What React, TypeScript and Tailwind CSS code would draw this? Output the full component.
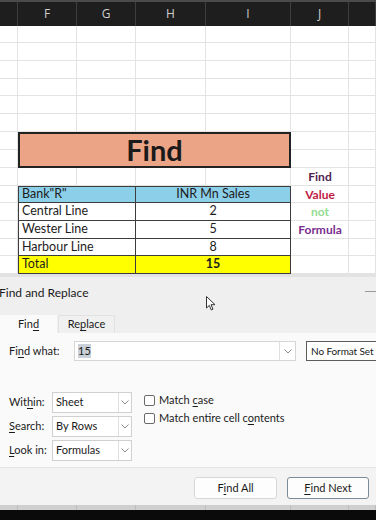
import React from "react";

const cols = ["", "F", "G", "H", "I", "J", ""];

function U({ children }: { children: React.ReactNode }) {
  return <span className="underline underline-offset-[2px] decoration-[1px]">{children}</span>;
}

function Chevron() {
  return (
    <svg width="8" height="5" viewBox="0 0 8 5" className="block">
      <polyline points="0.5,0.5 4,4 7.5,0.5" fill="none" stroke="#8a8a8a" strokeWidth="1" />
    </svg>
  );
}

function Select({ value }: { value: string }) {
  return (
    <div className="flex h-[21px] w-[80px] shrink-0 items-stretch border border-[#d0d0d0] bg-white">
      <div className="flex flex-1 items-center pl-[3px] text-[11px] text-[#1a1a1a]">{value}</div>
      <div className="flex w-[13px] items-center justify-center border-l border-[#e0e0e0]">
        <Chevron />
      </div>
    </div>
  );
}

function CheckRow({ children }: { children: React.ReactNode }) {
  return (
    <div className="flex h-[18px] items-center gap-[4px]">
      <div className="h-[11px] w-[11px] shrink-0 rounded-[2px] border border-[#6a6a6a] bg-white" />
      <div className="whitespace-nowrap text-[11px] text-[#1a1a1a]">{children}</div>
    </div>
  );
}

export default function App() {
  const bg: React.ReactNode[] = [];
  for (let r = 0; r < 14; r++) {
    for (let c = 0; c < 7; c++) {
      bg.push(
        <div
          key={`${r}-${c}`}
          className="border-b border-r border-[#e3e3e3]"
          style={{ gridRowStart: r + 1, gridColumnStart: c + 1 }}
        />
      );
    }
  }
  const cell = "flex items-center border-b border-r border-[#3c3c3c] text-[12.5px] text-[#1c1c1c]";
  return (
    <div
      className="relative h-[520px] w-[376px] overflow-hidden bg-white"
      style={{ fontFamily: "Lato, 'Liberation Sans', sans-serif" }}
    >
      {/* Column header */}
      <div className="h-[2px] bg-[#4a4a4a]" />
      <div className="grid h-[24px] grid-cols-[18px_59px_59px_70px_85px_58px_27px] bg-[#1e1e1e]">
        {cols.map((c, i) => (
          <div
            key={i}
            className="flex items-center justify-center border-r border-[#3e3e3e] text-[12px] text-[#cfcfcf]"
            style={{ fontFamily: "'Open Sans', sans-serif" }}
          >
            {c}
          </div>
        ))}
      </div>

      {/* Sheet grid */}
      <div className="grid grid-cols-[18px_59px_59px_70px_85px_58px_27px] grid-rows-[17px_18px_18px_17px_18px_18px_18px_18px_18px_17px_18px_18px_17px_18px]">
        {bg}
        <div className="col-start-2 col-span-4 row-start-7 row-span-2 flex items-center justify-center border-2 border-[#222] bg-[#eca486] text-[29px] font-bold text-[#1a1a1a]">
          Find
        </div>
        <div className="col-start-6 row-start-9 flex items-center justify-center text-[12px] font-bold text-[#4e2250]">Find</div>
        <div className="col-start-6 row-start-10 flex items-center justify-center text-[12px] font-bold text-[#c0193f]">Value</div>
        <div className="col-start-6 row-start-11 flex items-center justify-center text-[12px] font-bold text-[#94dc94]">not</div>
        <div className="col-start-6 row-start-12 flex items-center justify-center text-[12px] font-bold text-[#7a2e8e]">Formula</div>

        <div className={`${cell} col-start-2 col-span-2 row-start-10 border-l border-t bg-[#8ccfe8] pl-[3px]`}>Bank"R"</div>
        <div className={`${cell} col-start-4 col-span-2 row-start-10 border-t bg-[#8ccfe8] justify-center`}>INR Mn Sales</div>
        <div className={`${cell} col-start-2 col-span-2 row-start-11 border-l bg-white pl-[3px]`}>Central Line</div>
        <div className={`${cell} col-start-4 col-span-2 row-start-11 bg-white justify-center`}>2</div>
        <div className={`${cell} col-start-2 col-span-2 row-start-12 border-l bg-white pl-[3px]`}>Wester Line</div>
        <div className={`${cell} col-start-4 col-span-2 row-start-12 bg-white justify-center`}>5</div>
        <div className={`${cell} col-start-2 col-span-2 row-start-13 border-l bg-white pl-[3px]`}>Harbour Line</div>
        <div className={`${cell} col-start-4 col-span-2 row-start-13 bg-white justify-center`}>8</div>
        <div className={`${cell} col-start-2 col-span-2 row-start-14 border-l bg-[#ffff00] pl-[3px]`}>Total</div>
        <div className={`${cell} col-start-4 col-span-2 row-start-14 bg-[#ffff00] justify-center font-bold`}>15</div>
      </div>

      <div className="h-[3px] bg-[#e2e2e2]" />

      {/* Dialog */}
      <div
        className="flex h-[228px] flex-col bg-[#efefef] text-[#1a1a1a]"
        style={{ fontFamily: "Lato, 'Liberation Sans', sans-serif" }}
      >
        <div className="relative h-[38px]">
          <div className="absolute left-[-1px] top-[7px] text-[12px]">Find and Replace</div>
          <div className="absolute right-0 top-[14px] h-px w-[11px] bg-[#9a9a9a]" />
        </div>
        <div className="flex h-[18px] items-end">
          <div className="flex h-[18px] w-[57px] items-center justify-center bg-[#fafafa] text-[11px]">
            Fin<U>d</U>
          </div>
          <div className="ml-px flex h-[18px] w-[57px] items-center justify-center border border-b-0 border-[#e2e2e2] bg-[#f0f0f0] text-[11px]">
            Re<U>p</U>lace
          </div>
        </div>
        <div className="flex h-[134px] flex-col bg-[#fafafa] pl-[9px] pt-[8px]">
          <div className="flex h-[20px] items-center">
            <div className="w-[65px] shrink-0 text-[11px]">
              Fi<U>n</U>d what:
            </div>
            <div className="flex h-[20px] w-[222px] shrink-0 items-stretch border border-[#d6d6d6] bg-white">
              <div className="flex flex-1 items-center pl-[3px]">
                <span className="bg-[#c9d0d8] text-[11px] leading-[14px]">15</span>
              </div>
              <div className="flex w-[16px] items-center justify-center border-l border-[#e0e0e0]">
                <Chevron />
              </div>
            </div>
            <div className="ml-[10px] flex h-[20px] w-[80px] shrink-0 items-center whitespace-nowrap border border-[#5c5c5c] bg-white pl-[4px] text-[10px] tracking-[-0.1px]">
              No Format Set
            </div>
          </div>
          <div className="mt-[31px] flex">
            <div className="flex shrink-0 flex-col gap-[3px]">
              <div className="flex items-center">
                <div className="w-[43px] shrink-0 text-[11px]">
                  Wit<U>h</U>in:
                </div>
                <Select value="Sheet" />
              </div>
              <div className="flex items-center">
                <div className="w-[43px] shrink-0 text-[11px]">
                  <U>S</U>earch:
                </div>
                <Select value="By Rows" />
              </div>
              <div className="flex items-center">
                <div className="w-[43px] shrink-0 text-[11px]">
                  <U>L</U>ook in:
                </div>
                <Select value="Formulas" />
              </div>
            </div>
            <div className="ml-[12px] mt-[-1px] flex flex-col">
              <CheckRow>
                Match <U>c</U>ase
              </CheckRow>
              <CheckRow>
                Match entire cell c<U>o</U>ntents
              </CheckRow>
            </div>
          </div>
        </div>
        <div className="flex h-[38px] items-start justify-end gap-[10px] border-t border-[#e4e4e4] bg-[#f3f3f3] pr-[7px] pt-[9px]">
          <div className="flex h-[22px] w-[83px] items-center justify-center rounded-[3px] border border-[#d8d8d8] bg-[#fdfdfd] text-[11px]">
            F<U>i</U>nd All
          </div>
          <div className="flex h-[22px] w-[82px] items-center justify-center rounded-[3px] border border-[#7a8a98] bg-[#fdfdfd] text-[11px]">
            <U>F</U>ind Next
          </div>
        </div>
      </div>

      <div className="grid h-[5px] grid-cols-[18px_59px_59px_70px_85px_58px_27px] bg-[#cfcfcf]">
        {cols.map((_, i) => (
          <div key={i} className="border-r border-[#bdbdbd]" />
        ))}
      </div>
      <div className="h-[10px] bg-[#0a0a0a]" />

      {/* Mouse cursor */}
      <svg className="absolute left-[206px] top-[296px]" width="10" height="15" viewBox="0 0 10 15">
        <path d="M0.5 0.5 L0.5 12 L3.3 9.4 L5.3 14 L7 13.2 L5 8.7 L9 8.7 Z" fill="#ffffff" stroke="#333" strokeWidth="1" strokeLinejoin="round" />
      </svg>
    </div>
  );
}
